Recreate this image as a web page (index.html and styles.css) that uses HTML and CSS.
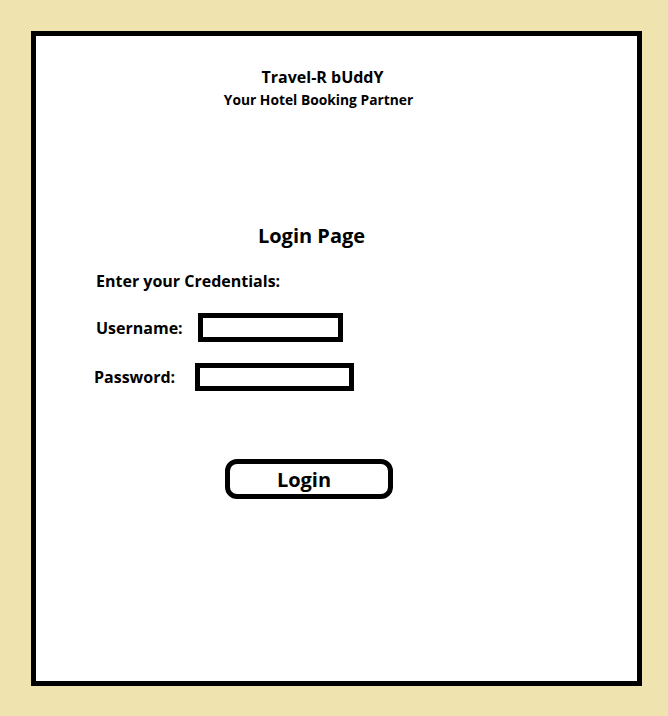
FILE: index.html
```html
<!DOCTYPE html>
<html lang="en">
<head>
<meta charset="utf-8">
<title>Travel-R bUddY - Login</title>
<link rel="stylesheet" href="styles.css">
</head>
<body>
  <div class="card">
    <header class="brand">
      <div class="brand-name">Travel-R bUddY</div>
      <div class="brand-tag">Your Hotel Booking Partner</div>
    </header>
    <main class="login">
      <h1 class="login-title">Login Page</h1>
      <p class="prompt">Enter your Credentials:</p>
      <div class="field field-user">
        <label class="field-label" for="username">Username:</label>
        <input class="field-input" id="username" type="text">
      </div>
      <div class="field field-pass">
        <label class="field-label" for="password">Password:</label>
        <input class="field-input" id="password" type="password">
      </div>
      <button class="login-btn" type="button">Login</button>
    </main>
  </div>
</body>
</html>
```

FILE: styles.css
```css
* {
  box-sizing: border-box;
}

html, body {
  margin: 0;
  padding: 0;
}

body {
  width: 668px;
  height: 716px;
  background: #efe4b0;
  padding: 31px 0 0 31px;
  font-family: "Open Sans", Lato, "Liberation Sans", sans-serif;
  font-weight: 700;
  color: #000;
  overflow: hidden;
}

.card {
  width: 611px;
  height: 655px;
  background: #fff;
  border: 5px solid #000;
  padding-top: 32px;
}

.brand {
  text-align: center;
  padding-right: 28px;
}

.brand-name {
  font-size: 16px;
  line-height: 18px;
}

.brand-tag {
  font-size: 13.8px;
  line-height: 16px;
  margin-top: 6px;
  padding-right: 8px;
}

.login {
  display: flex;
  flex-direction: column;
  align-items: flex-start;
}

.login-title {
  margin: 117px 0 0 0;
  align-self: stretch;
  text-align: center;
  padding-right: 50px;
  font-size: 20px;
  line-height: 22px;
  font-weight: 700;
}

.prompt {
  margin: 24px 0 0 60px;
  font-size: 16px;
  line-height: 20px;
}

.field {
  display: flex;
  align-items: center;
  font-size: 16px;
  line-height: 20px;
}

.field-user {
  margin: 22px 0 0 60px;
}

.field-pass {
  margin: 21px 0 0 58px;
}

.field-user .field-label {
  width: 102px;
}

.field-pass .field-label {
  width: 101px;
}

.field-input {
  border: 5px solid #000;
  border-radius: 0;
  background: #fff;
  outline: none;
  padding: 0;
  margin: 0;
}

.field-user .field-input {
  width: 145px;
  height: 29px;
}

.field-pass .field-input {
  width: 159px;
  height: 28px;
}

.login-btn {
  margin: 68px 0 0 189px;
  width: 168px;
  height: 40px;
  border: 5px solid #000;
  border-radius: 12px;
  background: #fff;
  font-family: inherit;
  font-weight: 700;
  font-size: 20px;
  line-height: 24px;
  color: #000;
  padding: 2px 10px 0 0;
  display: flex;
  align-items: center;
  justify-content: center;
}
```
